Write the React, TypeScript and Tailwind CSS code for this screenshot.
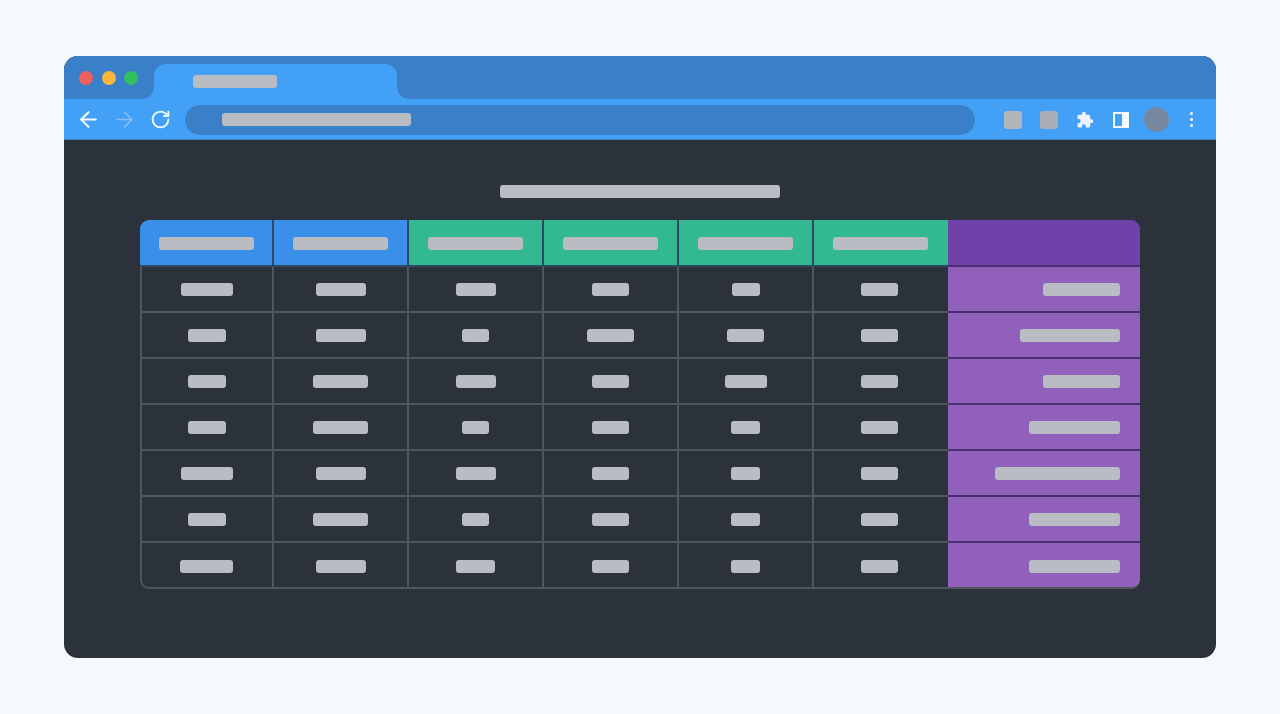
import { ArrowLeft, ArrowRight, RotateCw } from "lucide-react";

const rows: [number[], number][] = [
  [[52, 50, 40, 37, 28, 37], 77],
  [[38, 50, 27, 47, 37, 37], 100],
  [[38, 55, 40, 37, 42, 37], 77],
  [[38, 55, 27, 37, 29, 37], 91],
  [[52, 50, 40, 37, 29, 37], 125],
  [[38, 55, 27, 37, 29, 37], 91],
  [[53, 50, 39, 37, 29, 37], 91],
];

const heads = ["bg-[#3a8fe9]", "bg-[#3a8fe9]", "bg-[#33b98f]", "bg-[#33b98f]", "bg-[#33b98f]", "bg-[#33b98f]"];

function Bar({ w }: { w: number }) {
  return <div className="h-[13px] rounded-[3px] bg-[#b9bcc2]" style={{ width: w }} />;
}

function Puzzle() {
  return (
    <svg width="18" height="18" viewBox="0 0 24 24" fill="#eef4fb">
      <path d="M20.5 11H19V7a2 2 0 0 0-2-2h-4V3.5a2.5 2.5 0 0 0-5 0V5H4a2 2 0 0 0-2 2v3.8h1.5a2.7 2.7 0 0 1 0 5.4H2V20a2 2 0 0 0 2 2h3.8v-1.5a2.7 2.7 0 0 1 5.4 0V22H17a2 2 0 0 0 2-2v-4h1.5a2.5 2.5 0 0 0 0-5z" />
    </svg>
  );
}

const colPad = (i: number, head: boolean) =>
  i === 0 ? "pl-[1px]" : i === 5 ? (head ? "pr-[2px]" : "pr-[3px]") : "";

export default function App() {
  return (
    <div className="h-[714px] w-full bg-[#f5f9fc] px-16 pt-14">
      <div className="flex h-[602px] flex-col overflow-hidden rounded-[14px] bg-[#2b323b]">
        <div className="flex h-[43px] shrink-0 bg-[#3a80c8]">
          <div className="flex w-[90px] items-center gap-[8.5px] pl-[15px] pt-[1px]">
            <span className="h-[14px] w-[14px] rounded-full bg-[#ee5f5f]" />
            <span className="h-[14px] w-[14px] rounded-full bg-[#fbb53c]" />
            <span className="h-[14px] w-[14px] rounded-full bg-[#2fc05f]" />
          </div>
          <div className="relative mt-2 flex h-[35px] w-[243px] items-center rounded-t-[12px] bg-[#42a0f7] pl-[39px]">
            <div className="absolute bottom-0 -left-3 h-3 w-3 bg-[#42a0f7]">
              <div className="h-3 w-3 rounded-br-[12px] bg-[#3a80c8]" />
            </div>
            <div className="absolute bottom-0 -right-3 h-3 w-3 bg-[#42a0f7]">
              <div className="h-3 w-3 rounded-bl-[12px] bg-[#3a80c8]" />
            </div>
            <div className="h-[13px] w-[84px] rounded-[3px] bg-[#b9bcc2]" />
          </div>
        </div>
        <div className="flex h-[41px] shrink-0 items-center border-b border-[#3a80c8] bg-[#42a0f7] pt-[1px]">
          <div className="flex w-[121px] shrink-0 items-center pl-[12px]">
            <ArrowLeft size={25} color="#f3f8fd" strokeWidth={2} />
            <ArrowRight size={25} color="#86bdf2" strokeWidth={1.6} className="ml-[11px]" />
            <RotateCw size={21} color="#f3f8fd" strokeWidth={2.2} className="ml-[13px]" />
          </div>
          <div className="flex h-[30px] w-[790px] shrink-0 items-center rounded-full bg-[#3a80c8] pl-[37px]">
            <div className="h-[13px] w-[189px] rounded-[3px] bg-[#b9bcc2]" />
          </div>
          <div className="ml-[29px] h-[18px] w-[18px] rounded-[3px] bg-[#b2b6bc]" />
          <div className="ml-[18px] h-[18px] w-[18px] rounded-[3px] bg-[#a9aeb5]" />
          <div className="ml-[18px] flex h-[18px] w-[18px] items-center justify-center">
            <Puzzle />
          </div>
          <div className="ml-[19px] flex h-[16px] w-[16px] border-2 border-[#f3f8fd]">
            <div className="w-[7px]" />
            <div className="flex-1 bg-[#f3f8fd]" />
          </div>
          <div className="ml-[15px] h-[25px] w-[25px] rounded-full bg-[#77889e]" />
          <div className="ml-[21px] flex flex-col gap-[3px]">
            <span className="h-[3px] w-[3px] rounded-full bg-[#f3f8fd]" />
            <span className="h-[3px] w-[3px] rounded-full bg-[#f3f8fd]" />
            <span className="h-[3px] w-[3px] rounded-full bg-[#f3f8fd]" />
          </div>
        </div>
        <div className="flex flex-1 flex-col items-center pt-[45px]">
          <div className="h-[13px] w-[280px] rounded-[3px] bg-[#b9bcc2]" />
          <div className="relative mt-[22px] w-[1000px]">
            <div className="grid grid-cols-[134px_135px_135px_135px_135px_134px_192px] grid-rows-[47px_repeat(7,46px)] overflow-hidden rounded-[9px]">
              {heads.map((c, i) => (
                <div key={i} className={`${c} flex items-center justify-center pt-[1px] ${colPad(i, true)} ${i < 5 ? "border-r-2" : ""} border-b-2 border-[#2e4a63]`}>
                  <Bar w={95} />
                </div>
              ))}
              <div className="border-b-2 border-[#4b2f70] bg-[#7140a8]" />
              {rows.map(([cells, right], r) => (
                <div key={r} className="contents">
                  {cells.map((w, i) => (
                    <div key={i} className={`flex items-center justify-center pt-[1px] ${colPad(i, false)} ${i < 5 ? "border-r-2" : ""} ${r < 6 ? "border-b-2" : ""} border-[#50565e]`}>
                      <Bar w={w} />
                    </div>
                  ))}
                  <div className={`flex items-center justify-end bg-[#9060bb] pr-5 pt-[1px] ${r < 6 ? "border-b-2 border-[#4b2f70]" : ""}`}>
                    <Bar w={right} />
                  </div>
                </div>
              ))}
            </div>
            <div className="absolute inset-x-0 top-[47px] bottom-0 rounded-bl-[9px] rounded-br-[9px] border-b-2 border-l-2 border-[#50565e]" />
          </div>
        </div>
      </div>
    </div>
  );
}
